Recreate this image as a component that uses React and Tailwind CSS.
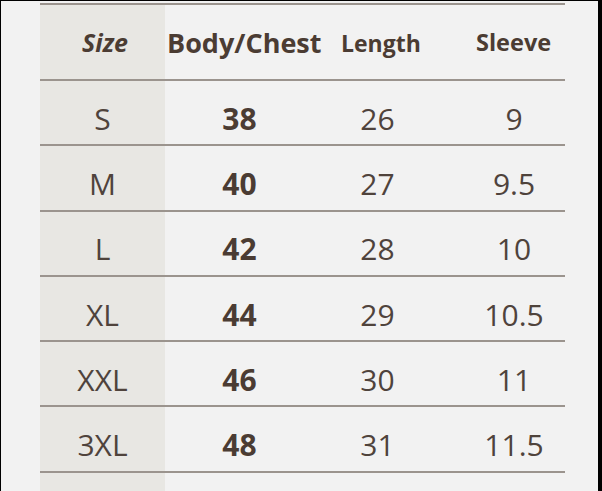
import React from "react";

const rows = [
  ["S", "38", "26", "9"],
  ["M", "40", "27", "9.5"],
  ["L", "42", "28", "10"],
  ["XL", "44", "29", "10.5"],
  ["XXL", "46", "30", "11"],
  ["3XL", "48", "31", "11.5"],
];

export default function App() {
  return (
    <div
      className="w-[602px] h-[491px] bg-[#f2f2f2] border-l border-t border-black border-r-4 overflow-hidden text-[#4b3c33]"
      style={{ fontFamily: '"Open Sans", "Liberation Sans", sans-serif' }}
    >
      <div className="ml-[39px] mt-[2px] w-[525px] border-t-2 border-[#9b948e]">
        <div className="grid grid-cols-[125px_150px_125px_125px] h-[76px] border-b-2 border-[#9b948e]">
          <div className="bg-[#e8e7e3] flex items-center justify-center text-[25px] font-bold italic pt-[2px] pl-[5px]">
            Size
          </div>
          <div className="flex items-center justify-start text-[27px] font-bold pl-[2px] pt-[2px] whitespace-nowrap">
            Body/Chest
          </div>
          <div className="flex items-center justify-start text-[23px] font-bold pl-[26px] pt-[2px]">
            Length
          </div>
          <div className="flex items-center justify-start text-[23.5px] font-bold pl-[36px] pt-[2px]">
            Sleeve
          </div>
        </div>
        {rows.map((r) => (
          <div
            key={r[0]}
            className="grid grid-cols-[125px_150px_125px_125px] h-[65.3px] border-b-2 border-[#9b948e] text-[30px] font-normal text-[#4f433c]"
          >
            <div className="bg-[#e8e7e3] flex items-center justify-center pt-[11px]">{r[0]}</div>
            <div className="flex items-center justify-center font-bold text-[#4b3c33] pt-[11px] pr-[1px]">{r[1]}</div>
            <div className="flex items-center justify-center pt-[11px]">{r[2]}</div>
            <div className="flex items-center justify-center pt-[11px] pl-[23px] whitespace-nowrap">{r[3]}</div>
          </div>
        ))}
        <div className="grid grid-cols-[125px_150px_125px_125px] h-[40px]">
          <div className="bg-[#e8e7e3]"></div>
        </div>
      </div>
    </div>
  );
}
